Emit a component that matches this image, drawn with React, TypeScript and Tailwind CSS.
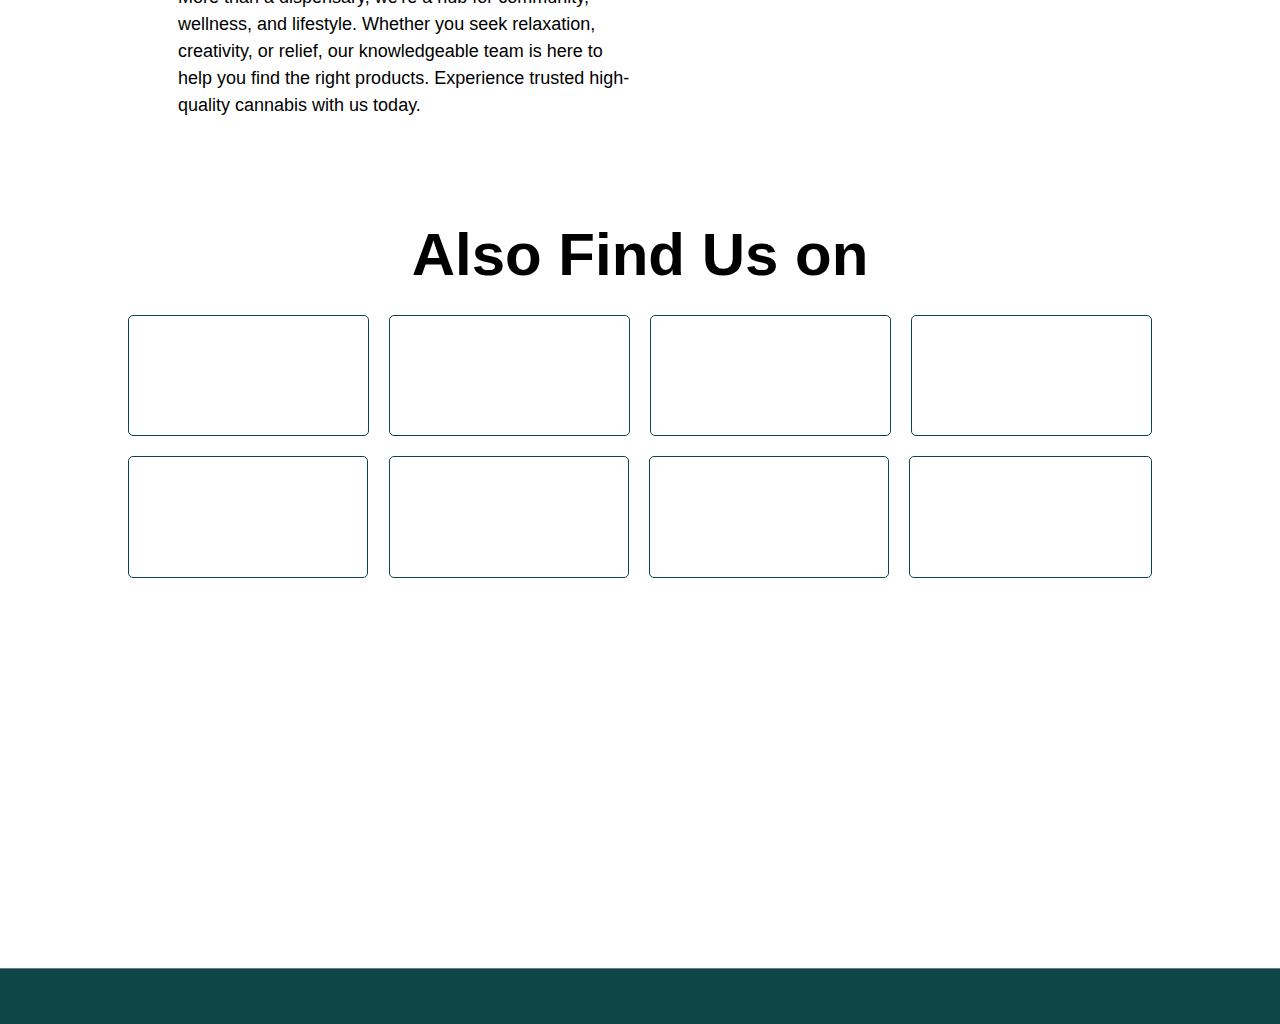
const ROW_ONE = [241, 241, 241, 241];
const ROW_TWO = [240, 240, 240, 243];

export default function App() {
  return (
    <div className="min-h-[1100px] bg-white flex flex-col font-['Liberation_Sans',Arial,sans-serif] text-black overflow-hidden">
      <section className="pl-[178px] mt-[-16px]">
        <p className="w-[462px] text-[18px] leading-[27px]">
          More than a dispensary, we're a hub for community, wellness, and lifestyle. Whether you seek relaxation,
          creativity, or relief, our knowledgeable team is here to help you find the right products. Experience
          trusted high-quality cannabis with us today.
        </p>
      </section>

      <section className="mt-[101px] px-[128px]">
        <h2 className="text-center text-[60px] font-bold leading-[70px]">Also Find Us on</h2>
        <div className="mt-[25px] flex flex-col gap-[20px]">
          <div className="flex gap-[20px]">
            {ROW_ONE.map((w, i) => (
              <div key={i} className="h-[121px] rounded-[5px] border border-[#104547] bg-white" style={{ width: w }} />
            ))}
          </div>
          <div className="flex">
            {ROW_TWO.map((w, i) => (
              <div
                key={i}
                className={`h-[122px] rounded-[5px] border border-[#104547] bg-white ${i === 0 ? "" : i === 1 ? "ml-[21px]" : "ml-[20px]"}`}
                style={{ width: w }}
              />
            ))}
          </div>
        </div>
      </section>

      <footer className="mt-[390px] h-[200px] bg-[#104547] border-t border-[#5f7f80]" />
    </div>
  );
}
